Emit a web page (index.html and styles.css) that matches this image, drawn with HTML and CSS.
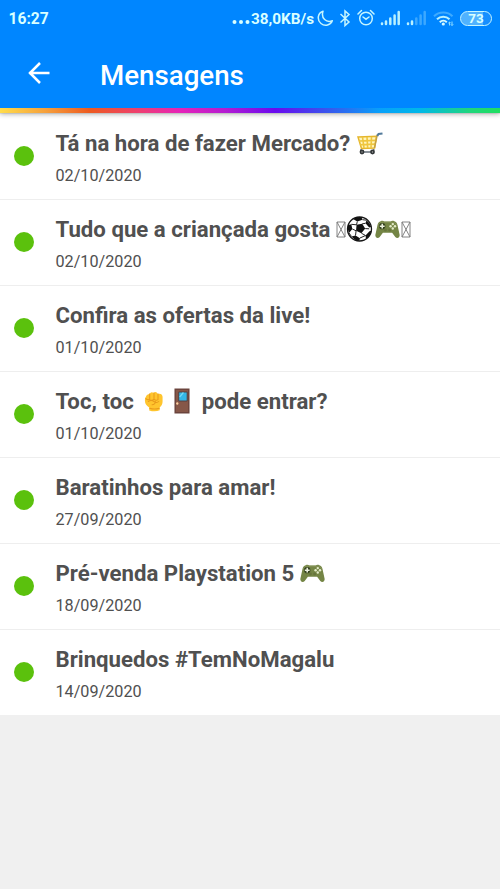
FILE: index.html
```html
<!DOCTYPE html>
<html lang="pt-BR">
<head>
<meta charset="utf-8">
<title>Mensagens</title>
<link rel="stylesheet" href="styles.css">
</head>
<body>
<svg class="defs" aria-hidden="true">
  <symbol id="gamepad" viewBox="0 0 26 20" preserveAspectRatio="none">
    <path d="M6 1.200C7 .5 9 .6 9.600 1.600h6.800C17 .6 19 .5 20 1.200c2 .3 2.800 1.700 3.400 4L25.600 15.500c.5 3.300-2.800 4.500-4.500 2.300L17.800 13.500H8.200L4.900 17.800C3.200 20-.1 18.800.4 15.500L2.600 5.200C3.200 2.900 4 1.500 6 1.200z" fill="#748545"/>
    <path d="M3.600 5.500C4 3.500 5 2.300 7 2.300h12c2 0 3 1.200 3.400 3.200" fill="none" stroke="#87955a"/>
    <circle cx="7.500" cy="6.500" r="3.300" fill="#35421f"/>
    <path d="M7.500 4v5M5 6.500h5" stroke="#edf2df" stroke-width="1.600"/>
    <g fill="#e4ebc9"><circle cx="18.500" cy="4.300" r="1.250"/><circle cx="16.200" cy="6.600" r="1.250"/><circle cx="20.800" cy="6.600" r="1.250"/><circle cx="18.500" cy="8.900" r="1.250"/></g>
    <circle cx="10.800" cy="10.500" r="1.500" fill="#67753c"/><circle cx="15.200" cy="10.500" r="1.500" fill="#67753c"/>
  </symbol>
</svg>
<header class="header">
  <div class="status">
    <span class="clock">16:27</span>
    <svg class="dots" width="18" height="20" viewBox="0 0 18 20"><g fill="#d9ffff"><circle cx="2.500" cy="13" r="2"/><circle cx="9" cy="13" r="2"/><circle cx="15.500" cy="13" r="2"/></g></svg>
    <span class="speed">38,0KB/s</span>
    <svg class="moon" width="17" height="20" viewBox="0 0 17 20"><path d="M6 2.200C.5 4-.2 11 4 14.500c4 3.200 9.700 1.600 11.300-2.700C9.500 14 3.700 9.500 6 2.200z" fill="none" stroke="#c5f5ff" stroke-width="1.500" stroke-linejoin="round"/></svg>
    <svg class="bluetooth" width="12" height="20" viewBox="0 0 12 20"><path d="M1.500 5l8.500 8-4 3.500V2L10 5.500l-8.500 8" fill="none" stroke="#c5f5ff" stroke-width="1.500"/></svg>
    <svg class="alarm" width="18" height="20" viewBox="0 0 18 20"><g fill="none" stroke="#c5f5ff" stroke-width="1.500" stroke-linecap="round"><circle cx="9" cy="9.500" r="6.300"/><path d="M1 5L4.500 1.500M17 5L13.500 1.500M6 8l3 2.200L12 8"/></g></svg>
    <svg class="signal" width="21" height="20" viewBox="0 0 21 20"><path d="M2 14.500V15M6 12.500v2.500M10.300 9.500V15M14.600 6.500V15M18.700 3V15" stroke="#b9f1ff" stroke-width="2.500" stroke-linecap="round"/></svg>
    <svg class="signal" width="21" height="20" viewBox="0 0 21 20"><g stroke-width="2.500" stroke-linecap="round"><path d="M2 14.500V15M6 12.500v2.500" stroke="#b9f1ff"/><path d="M10.300 9.500V15M14.600 6.500V15M18.700 3V15" stroke="#3ca8ff"/></g></svg>
    <svg class="wifi" width="22" height="20" viewBox="0 0 22 20"><g fill="none" stroke-width="2"><path d="M1 7.200c5-5 13.500-5 18.500 0" stroke="#3daaff"/><path d="M4 10.300c3.500-3.500 9-3.500 12.500 0" stroke="#b9f1ff"/><path d="M6.800 13.200c2-2 5-2 7 0" stroke="#d5f9ff"/></g><circle cx="10.300" cy="15" r="1.600" fill="#d5f9ff"/><path d="M16.500 16.500v-3.500m-1.200 1.200l1.200-1.200 1.200 1.200M19 12.500v4m-1.200-1.200l1.200 1.200 1.200-1.200" fill="none" stroke="#8ddcff"/></svg>
    <span class="battery">73</span>
  </div>
  <div class="toolbar">
    <svg class="back" width="24" height="24" viewBox="0 0 24 24"><path d="M22.500 12H2M13 2L3 12l10 10" fill="none" stroke="#fff" stroke-width="2.500"/></svg>
    <h1 class="heading">Mensagens</h1>
  </div>
  <div class="rainbow"></div>
</header>
<main class="list">
  <article class="row"><i class="unread"></i><div><h2 class="title">Tá na hora de fazer Mercado?
    <svg class="emoji cart" width="26" height="23" viewBox="0 0 26 23"><path d="M1 5l18.500-.7L17.500 16 4.500 16.500z" fill="#fff5bd" stroke="#e5b62c" stroke-width="1.500"/><path d="M2 9l17-.6M3 12.700l15.500-.6M5.500 5l1.500 11M10 5l.7 11M14.500 5L14 16" fill="none" stroke="#efc63e" stroke-width="1.600"/><path d="M17.500 16l2.800-13.500" fill="none" stroke="#c5a142" stroke-width="1.400"/><path d="M20.300 4l1.200-2 4-.5" fill="none" stroke="#527a9b" stroke-width="2"/><path d="M4 17v3h12l1-3" fill="none" stroke="#66707b" stroke-width="1.300"/><circle cx="5" cy="20" r="2.400" fill="#323638"/><circle cx="15.500" cy="20" r="2.400" fill="#323638"/><circle cx="5" cy="20" r=".7" fill="#aaa"/><circle cx="15.500" cy="20" r=".7" fill="#aaa"/></svg></h2><time class="date">02/10/2020</time></div></article>
  <article class="row"><i class="unread"></i><div><h2 class="title">Tudo que a criançada gosta
    <svg class="emoji tofu" width="10" height="17" viewBox="0 0 10 17"><path d="M1 1h8v15H1zL9 16M9 1L1 16" fill="none" stroke="#777" stroke-width=".9"/></svg><svg class="emoji ball" width="27" height="26" viewBox="0 0 27 26"><circle cx="13.500" cy="13" r="12" fill="#fff" stroke="#171717" stroke-width="1.300"/><g fill="#111"><path d="M10.500 8.800l5.700-1 3 4.800-3.800 4.600-5.300-2.400z"/><path d="M7 3q4-2.700 8.500-1.800l1 2.500-5.200 1.800zM2 9l3.300-.7 1 4.700L3 17Q1 13 2 9zM5.500 20.500l4-1 4.500 2.700-.7 2.500q-4.500 0-7.800-4.200zM19.500 19.500l4-4.200 1.800-.5q-1 5.500-5.300 8.200zM20.500 4.200q3.500 2.500 4.700 6.800l-2 .4-3.700-4.100z"/></g><path d="M10.500 8.800l.8-3.300M16.200 7.800l3.300-.5M19.200 12.600l4 .2M15.400 17.200l4.100 2.300M10.100 14.800l-.6 4.700M10.500 8.800l-5.200-.5M6.300 13l3.800 1.800M3 17l2.500 3.500M14 22l5.500-2.500M16.500 3.700l4 .5" stroke="#222" fill="none"/></svg><svg class="emoji pad" width="25" height="19"><use href="#gamepad"/></svg><svg class="emoji tofu last" width="10" height="17" viewBox="0 0 10 17"><path d="M1 1h8v15H1zL9 16M9 1L1 16" fill="none" stroke="#777" stroke-width=".9"/></svg></h2><time class="date">02/10/2020</time></div></article>
  <article class="row"><i class="unread"></i><div><h2 class="title">Confira as ofertas da live!</h2><time class="date">01/10/2020</time></div></article>
  <article class="row"><i class="unread"></i><div><h2 class="title">Toc, toc
    <svg class="emoji fist" width="20" height="21" viewBox="0 0 21 22"><path d="M2 6Q3 3 6 3q1-2.800 4-1.300Q13 .1 14.500 3 19 2 19.500 6v5q0 4-3 6v3.200q-5 2.200-11 .2v-3Q.5 14 1 9q0-2 1-3z" fill="#ffc52e"/><path d="M6 3v6M10.500 2v6M14.700 3v6M2 8q2 2 4 .5M6 9q2.500 1.500 4.500-.5 2 2 4.200.5M4.500 11q3-2 6 0t5 0M12 11q0 3-3.500 3.500M6 18q5 1.800 10 0" fill="none" stroke="#e99b1b" stroke-width="1.100" stroke-linecap="round"/></svg><svg class="emoji door" width="16" height="26" viewBox="0 0 17 26" preserveAspectRatio="none"><path d="M.5.5h16v25H.5z" fill="#6b443d"/><path d="M2 2h13v22H2z" fill="#865748"/><path d="M5 4h9v9H5z" fill="#34b7e6" stroke="#563f3e"/><path d="M6 9l4-4.500" stroke="#75daf5" stroke-width="1.300"/><circle cx="3.500" cy="15.500" r="1.200" fill="#ffd1a1"/></svg>pode entrar?</h2><time class="date">01/10/2020</time></div></article>
  <article class="row"><i class="unread"></i><div><h2 class="title">Baratinhos para amar!</h2><time class="date">27/09/2020</time></div></article>
  <article class="row"><i class="unread"></i><div><h2 class="title">Pré-venda Playstation 5
    <svg class="emoji" width="25" height="19"><use href="#gamepad"/></svg></h2><time class="date">18/09/2020</time></div></article>
  <article class="row"><i class="unread"></i><div><h2 class="title">Brinquedos #TemNoMagalu</h2><time class="date">14/09/2020</time></div></article>
</main>
</body>
</html>
```
FILE: styles.css
```css
* { box-sizing: border-box; }
body { margin: 0; height: 889px; overflow: hidden; background: #f0f0f0; font-family: Roboto, sans-serif; color: #505050; }
.defs { display: none; }
.header { position: relative; height: 113px; background: #0086ff; box-shadow: 0 1px 5px #0005; }
.status { display: flex; align-items: center; height: 36px; padding: 1px 8px 0 8.5px; color: #d9ffff; }
.status svg { flex: none; }
.clock { font-size: 15.6px; font-weight: 700; line-height: 20px; }
.dots { margin-left: auto; }
.speed { width: 65px; margin-left: 1px; font-size: 15.3px; font-weight: 700; white-space: nowrap; }
.moon { margin-left: 1px; }
.bluetooth { margin-left: 5px; }
.alarm { margin-left: 6px; }
.signal { margin-left: 5px; }
.wifi { margin-left: 6px; }
.battery { width: 32px; height: 15px; margin: -1px 0 0 5px; border: 1.5px solid #c5f5ff; border-radius: 8px; background: linear-gradient(90deg, #50b2ff 73%, #168fff 73%); font-size: 13.5px; font-weight: 700; line-height: 13px; text-align: center; }
.toolbar { display: flex; align-items: center; height: 72px; padding: 7px 0 0 27px; }
.back { flex: none; margin-top: -5px; }
.heading { margin: 0 0 0 49px; color: #fff; font-size: 27.7px; font-weight: 500; line-height: 36px; }
.rainbow { height: 5px; background: linear-gradient(90deg, #ffdc4a 0, #f6a13c 9%, #ed5a20 18%, #ee3e72 28%, #e622b8 36%, #b51bd1 45%, #6a0aee 55%, #3759ed 66%, #07a0fa 76%, #00b8e8 84%, #20d67c 94%, #20df60 100%); }
.row { display: flex; align-items: center; height: 86px; padding-left: 14px; border-top: 1px solid #eee; background: #fff; }
.row:first-child { border-color: transparent; background-clip: padding-box; }
.unread { flex: none; width: 20px; height: 20px; margin-top: -2px; margin-right: 21.5px; border-radius: 50%; background: #5bc10d; }
.title { display: flex; align-items: center; height: 34px; margin: 0; font-size: 22.2px; font-weight: 700; line-height: 34px; white-space: nowrap; }
.date { display: block; margin: 3px 0 -2px; font-size: 16.2px; line-height: 26px; }
.emoji { flex: none; margin-left: 6px; }
.cart { margin-left: 7px; }
.pad { margin-left: 2px; }
.ball { margin-left: 0; }
.tofu.last { margin-left: 1px; }
.fist { margin-left: 10px; }
.door { margin: 0 12px 0 10px; }
```
